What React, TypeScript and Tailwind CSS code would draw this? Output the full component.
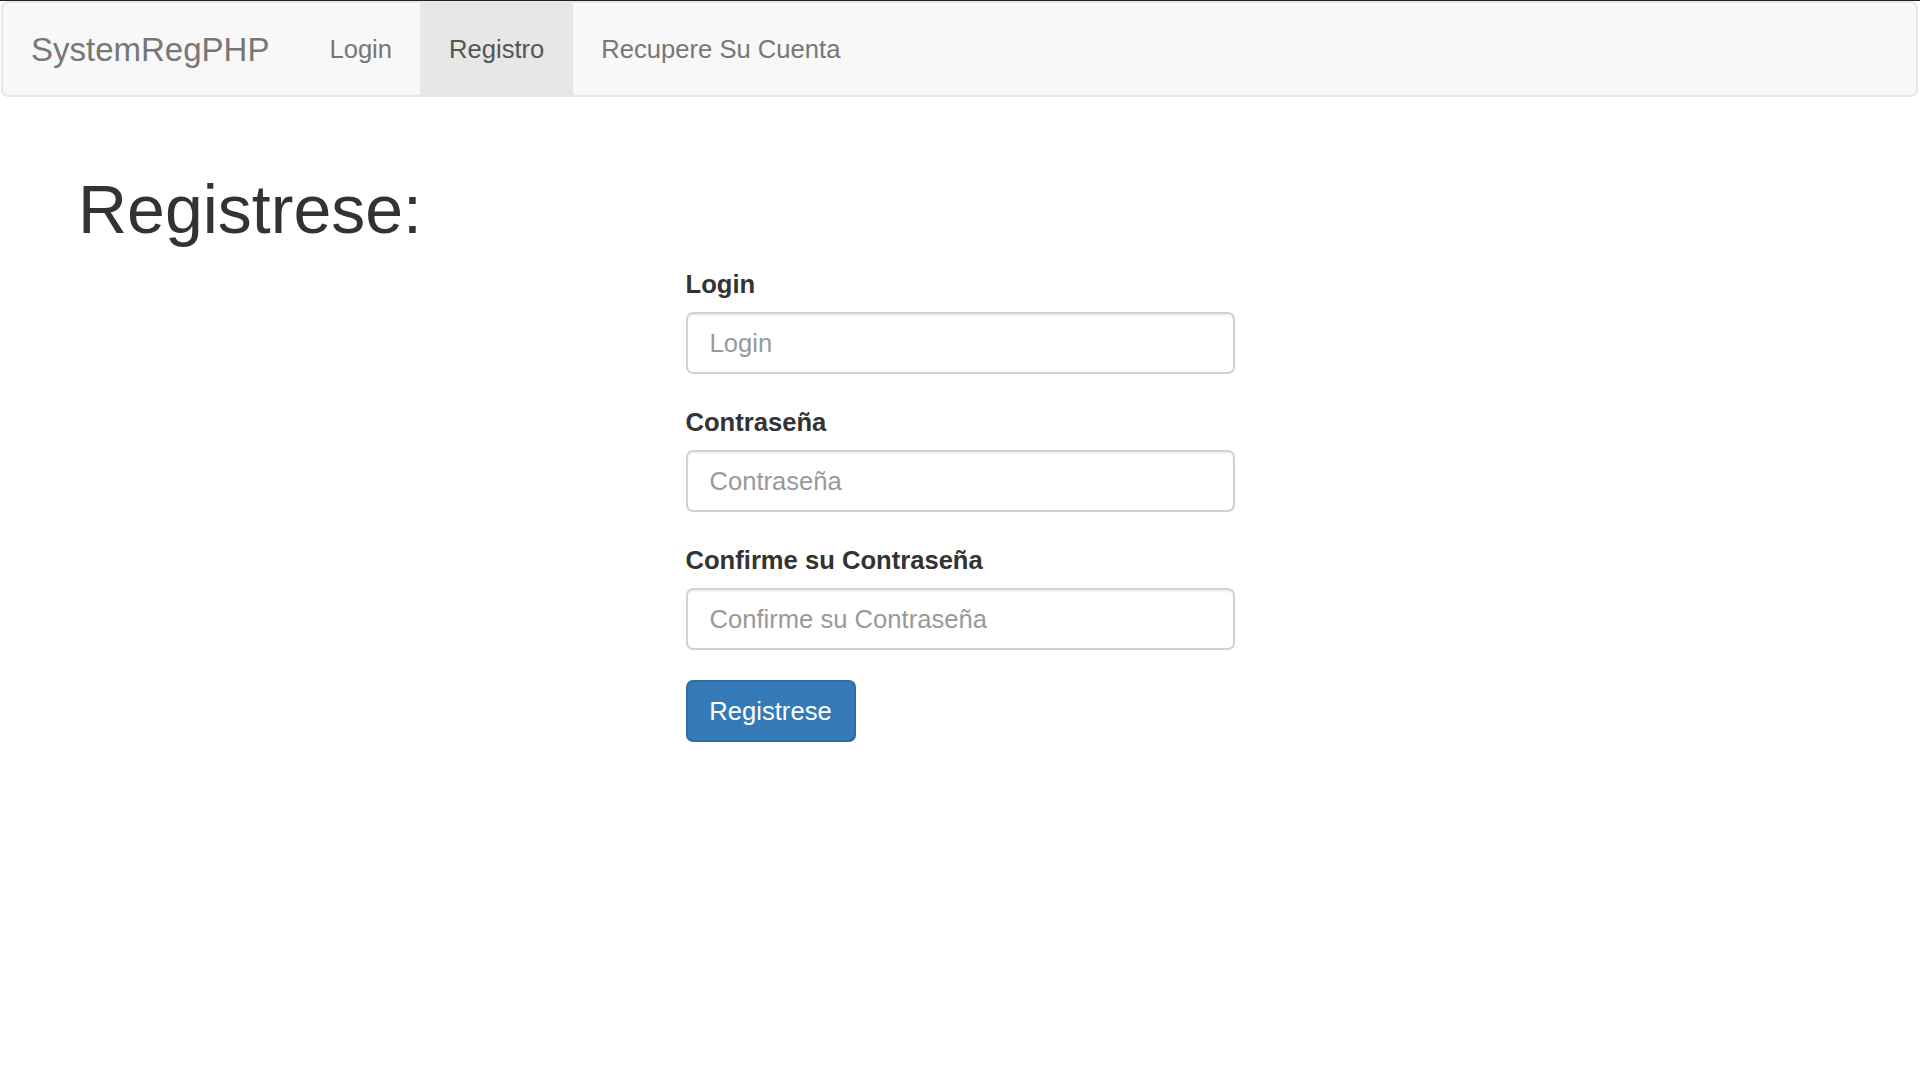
const links = [
  { label: 'Login', active: false },
  { label: 'Registro', active: true },
  { label: 'Recupere Su Cuenta', active: false },
];

const fields = [
  { id: 'login', label: 'Login', type: 'text' },
  { id: 'password', label: 'Contraseña', type: 'password' },
  { id: 'confirm', label: 'Confirme su Contraseña', type: 'password' },
];

export default function App() {
  return (
    <div className="min-h-screen bg-white font-['Liberation_Sans',Arial,sans-serif] text-[#333]">
      <div className="h-[1px] bg-[#222]" />

      {/* navbar */}
      <nav className="ml-[1px] mr-[2px] flex h-[96px] items-stretch rounded-[7px] border-2 border-[#e7e7e7] bg-[#f8f8f8]">
        <a className="flex items-center pl-[28px] pr-[32px] pt-[2px] text-[33px] text-[#777]">SystemRegPHP</a>
        <ul className="flex items-stretch">
          {links.map(l => (
            <li key={l.label}>
              <a
                className={
                  l.active
                    ? 'flex h-full items-center bg-[#e7e7e7] px-[29px] pt-[1px] text-[25.6px] text-[#555]'
                    : 'flex h-full items-center px-[28px] pt-[1px] text-[25.6px] text-[#777]'
                }
              >
                {l.label}
              </a>
            </li>
          ))}
        </ul>
      </nav>

      <div className="pl-[78px] pt-[75px]">
        <h1 className="mb-[19px] text-[68px] leading-[75px]">Registrese:</h1>
      </div>

      <form className="mx-auto w-[549px]" onSubmit={e => e.preventDefault()}>
        {fields.map(f => (
          <div key={f.id} className="mb-[30px]">
            <label htmlFor={f.id} className="mb-[9px] block text-[25.6px] font-bold leading-[37px] text-[#333]">
              {f.label}
            </label>
            <input
              id={f.id}
              type={f.type}
              placeholder={f.label}
              className="block h-[62px] w-full rounded-[7px] border-2 border-[#d2d2d2] bg-white px-[22px] text-[25.6px] text-[#555] shadow-[inset_0_2px_2px_rgba(0,0,0,0.06)] outline-none placeholder:text-[#999]"
            />
          </div>
        ))}
        <button
          type="submit"
          className="h-[62px] w-[170px] rounded-[7px] border-2 border-[#2e6da4] bg-[#337ab7] text-[25.6px] text-white"
        >
          Registrese
        </button>
      </form>
    </div>
  );
}
